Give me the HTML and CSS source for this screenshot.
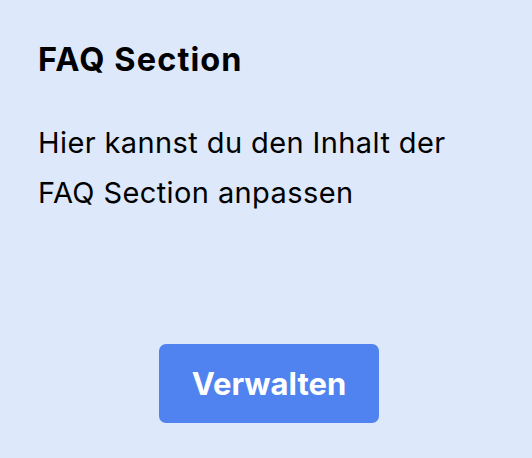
FILE: index.html
```html
<!DOCTYPE html>
<html lang="de">
<head>
<meta charset="utf-8">
<title>FAQ Section</title>
<link rel="stylesheet" href="styles.css">
</head>
<body>
<section class="card">
  <h2 class="card-title">FAQ Section</h2>
  <p class="card-text">Hier kannst du den Inhalt der FAQ Section anpassen</p>
  <div class="card-actions">
    <button class="btn" type="button">Verwalten</button>
  </div>
</section>
</body>
</html>
```
FILE: styles.css
```css
html, body {
  margin: 0;
  padding: 0;
}
body {
  background: #dde8fa;
  font-family: Inter, "Noto Sans", sans-serif;
  color: #000;
}
.card {
  box-sizing: border-box;
  height: 458px;
  padding: 41px 32px 35px 38px;
  display: flex;
  flex-direction: column;
}
.card-title {
  margin: 0;
  font-size: 32.5px;
  line-height: 38px;
  font-weight: 700;
  letter-spacing: 1.1px;
}
.card-text {
  margin: 39px 0 0;
  font-size: 29px;
  line-height: 50px;
  font-weight: 400;
  letter-spacing: 0.4px;
  max-width: 440px;
}
.card-actions {
  margin-top: auto;
  display: flex;
  justify-content: center;
}
.btn {
  width: 220px;
  height: 79px;
  border: 0;
  border-radius: 7px;
  background: #5083ef;
  color: #fff;
  font-family: Inter, "Noto Sans", sans-serif;
  font-size: 31px;
  font-weight: 700;
  padding: 0;
}
```
